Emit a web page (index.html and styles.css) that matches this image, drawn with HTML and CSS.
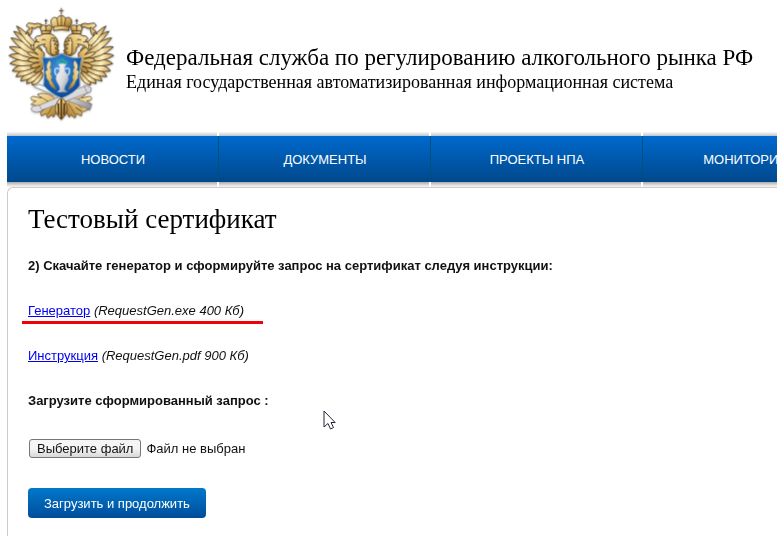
FILE: index.html
```html
<!DOCTYPE html>
<html lang="ru">
<head>
<meta charset="utf-8">
<title>Тестовый сертификат</title>
<link rel="stylesheet" href="styles.css">
</head>
<body>
<header class="header">
  <svg class="emblem" viewBox="0 0 375 390" aria-hidden="true">
    <defs>
      <linearGradient id="gold" x1="0" y1="0" x2="1" y2="1">
        <stop offset="0" stop-color="#fff3c4"/><stop offset=".5" stop-color="#e3bd6b"/><stop offset="1" stop-color="#95631f"/>
      </linearGradient>
      <linearGradient id="feather" x1="0" y1="0" x2="1" y2="0">
        <stop offset="0" stop-color="#c99b48"/><stop offset=".4" stop-color="#fff0bd"/><stop offset="1" stop-color="#bd8c3e"/>
      </linearGradient>
      <linearGradient id="silver" x1="0" y1="0" x2="1" y2="1">
        <stop offset="0" stop-color="#ffffff"/><stop offset=".6" stop-color="#d5d5d9"/><stop offset="1" stop-color="#85858d"/>
      </linearGradient>
      <radialGradient id="shield" cx=".45" cy=".35" r=".8">
        <stop offset="0" stop-color="#4a9be4"/><stop offset=".5" stop-color="#1762b5"/><stop offset="1" stop-color="#07377e"/>
      </radialGradient>
      <g id="half" stroke="#3d2f1c" stroke-width="2.5" stroke-linejoin="round">
        <g fill="url(#feather)">
          <path d="M132 222Q118 252 97 256Q92 242 112 214Z"/>
          <path d="M126 216Q106 248 80 251Q78 236 108 205Z"/>
          <path d="M120 211Q92 241 62 243Q63 227 104 198Z"/>
          <path d="M118 204Q82 231 48 230Q50 214 102 190Z"/>
          <path d="M117 197Q72 220 37 213Q40 198 103 182Z"/>
          <path d="M116 190Q66 205 30 191Q35 178 104 174Z"/>
          <path d="M116 183Q62 189 27 167Q34 156 106 166Z"/>
          <path d="M117 177Q62 174 28 141Q38 134 108 158Z"/>
          <path d="M118 171Q62 155 33 114Q44 110 112 150Z"/>
          <path d="M122 165Q66 134 41 94Q55 92 118 146Z"/>
          <path d="M128 163Q66 120 50 78Q69 84 125 148Z"/>
        </g>
        <g fill="url(#gold)">
          <path d="M133 159Q103 132 91 136Q99 152 114 164Q88 152 82 159Q96 173 116 176Q86 171 82 181Q98 191 117 187Q93 190 91 202Q104 208 121 198Q103 207 104 218Q119 220 130 205Z"/>
          <path d="M164 171C148 164 137 157 139 143L131 139L135 132L122 135C112 136 106 145 104 150C98 138 103 124 112 121L104 116Q107 106 121 107C133 98 151 98 162 107C177 119 177 139 171 151L183 172Z"/>
          <path d="M155 114L165 115L159 123L171 124L162 133L174 135L165 145L178 152L166 158L178 168L154 163C149 148 154 139 151 128Z"/>
          <path d="M127 98Q117 83 124 76Q130 72 138 79Q146 72 153 77Q160 84 149 98Z"/>
          <path d="M125 93L151 93L151 101L125 101Z"/>
          <path d="M138 73L138 57M133 62L143 62M138 75L138 94" fill="none"/>
          <path d="M124 73Q111 67 106 72L85 69L79 77L91 86Q79 91 76 102L85 96L88 108Q97 99 97 88L94 82L103 86Q113 78 124 82Z"/>
        </g>
        <path d="M125 120Q134 115 137 121" fill="none"/>
        <path d="M118 126L104 125" fill="none"/>
      </g>
      <g id="foot" fill="url(#gold)" stroke="#5a4421" stroke-width="2">
        <path d="M160 290Q135 274 112 283L124 294L100 289Q88 291 96 300L108 303L93 313L117 319L97 326L119 335L141 322L122 337L124 348L138 341L143 354L157 344L160 352L180 319Z"/>
        <path d="M121 290L147 306M121 326L145 304M143 343L163 310" fill="none"/>
      </g>
    </defs>
    <g class="emblem-art">
      <use href="#half"/>
      <use href="#half" transform="matrix(-1 0 0 1 368 0)"/>
      <use href="#foot"/>
      <use href="#foot" transform="matrix(-1 0 0 1 368 0)"/>
      <g fill="url(#silver)" stroke="#77767b" stroke-width="2">
        <path d="M101 260L117 253L275 314L269 330L254 323Z"/>
        <path d="M261 257L274 264L271 276L129 329Q113 341 100 334Q89 330 98 319L121 315L233 266Z"/>
        <path d="M251 254L262 280M117 315L129 334" fill="none"/>
      </g>
      <g fill="url(#gold)" stroke="#4c3414" stroke-width="2.5">
        <path d="M184 289Q157 318 170 342L184 359L198 342Q211 318 184 289Z"/>
        <path d="M184 291L184 356M175 310L176 345M193 310L192 345" fill="none" stroke-width="5"/>
        <path d="M159 82C145 62 158 46 171 55Q184 37 197 55C210 46 223 62 209 82Z"/>
        <path d="M184 43L184 24M177 32L191 32M184 47L184 82M171 55L175 82M197 55L193 82" fill="none"/>
        <path d="M161 80Q184 74 207 80L207 92Q184 86 161 92Z"/>
      </g>
      <path d="M126 171Q156 179 185 160Q216 179 246 171Q236 218 240 256Q222 281 185 295Q151 281 130 256Q136 218 126 171Z" fill="url(#shield)" stroke="#a5b2b6" stroke-width="3"/>
      <g fill="url(#gold)" stroke="#a98735" stroke-width="1">
        <path id="sprig" d="M149 181Q135 195 143 211Q132 211 140 227Q136 232 147 244Q148 259 169 269Q161 250 153 240Q159 229 151 222Q157 210 149 203Q156 191 149 181Z"/>
        <use href="#sprig" transform="matrix(-1 0 0 1 373 0)"/>
      </g>
      <path d="M172 190Q169 181 179 184L187 176L193 184Q204 180 200 191Q187 185 172 190Z" fill="#17999a" stroke="#43c3a7" stroke-width="2"/>
      <path d="M178 207Q160 198 166 221L176 232M195 207Q213 198 207 221L197 232" fill="none" stroke="#dbe2e8" stroke-width="4"/>
      <path d="M175 193Q187 188 199 193L194 199L195 215Q215 232 195 258L193 268L202 276L172 276L180 268L178 258Q158 232 178 215L179 199Z" fill="url(#silver)" stroke="#aab6c2" stroke-width="1"/>
    </g>
  </svg>
  <div class="heading">
    <div class="agency">Федеральная служба по регулированию алкогольного рынка РФ</div>
    <div class="system">Единая государственная автоматизированная информационная система</div>
  </div>
</header>
<nav class="menu">
  <a class="menu-item" href="#">НОВОСТИ</a>
  <a class="menu-item" href="#">ДОКУМЕНТЫ</a>
  <a class="menu-item" href="#">ПРОЕКТЫ НПА</a>
  <a class="menu-item" href="#">МОНИТОРИНГ</a>
</nav>
<main class="panel">
  <h1 class="title">Тестовый сертификат</h1>
  <p class="line strong">2) Скачайте генератор и сформируйте запрос на сертификат следуя инструкции:</p>
  <p class="line marked"><a href="#">Генератор</a> <em>(RequestGen.exe 400 Кб)</em></p>
  <p class="line"><a href="#">Инструкция</a> <em>(RequestGen.pdf 900 Кб)</em></p>
  <p class="line strong">Загрузите сформированный запрос :</p>
  <form class="form">
    <div class="file">
      <input class="file-input" type="file" id="request">
      <label class="file-button" for="request">Выберите файл</label>
      <span>Файл не выбран</span>
    </div>
    <button class="submit" type="button">Загрузить и продолжить</button>
  </form>
</main>
<svg class="cursor" viewBox="0 0 13 20" aria-hidden="true">
  <path d="M1 1V17L5 13.500L7.500 19L10.500 17.500L8 12.500H12.200Z" fill="#fff" stroke="#25253a"/>
</svg>
</body>
</html>
```

FILE: styles.css
```css
body {
  display: flex;
  flex-direction: column;
  min-height: 100vh;
  margin: 0;
  overflow: hidden;
  background: #fff;
  color: #111;
  font: 13px/15px "Liberation Sans", Arial, sans-serif;
}

.header {
  display: flex;
  height: 132px;
  white-space: nowrap;
}

.emblem {
  flex: none;
  width: 125px;
  height: 130px;
}

.emblem-art {
  filter: drop-shadow(0 2px 3px #bbb);
}

.heading {
  padding: 44px 0 0 1px;
  color: #000;
  font-family: "Liberation Serif", "Times New Roman", serif;
}

.agency {
  font-size: 23px;
  line-height: 28px;
}

.system {
  font-size: 18px;
  line-height: 20px;
}

.menu {
  display: flex;
  margin-left: 7px;
  overflow: hidden;
}

.menu-item {
  flex: 0 0 212px;
  box-sizing: border-box;
  height: 55px;
  padding-top: 20px;
  color: #fff;
  font-size: 13px;
  line-height: 15px;
  text-align: center;
  text-decoration: none;
  background:
    linear-gradient(#00556f, #004f7c) 211px 4px / 1px 46px no-repeat,
    linear-gradient(#0069ce, #00488b) 0 4px / 212px 46px no-repeat,
    linear-gradient(#fff, #fff) 210px 0 / 2px 55px no-repeat,
    linear-gradient(#f8f8f8, #c0c4c8 4px, #aaa 50px, #eee 54px);
}

.panel {
  flex: 1;
  margin-left: 7px;
  padding: 16px 20px;
  border: 1px solid #ccc;
  border-width: 1px 0 0 1px;
  border-radius: 6px 0 0 0;
}

.title {
  margin: 0 0 24px;
  color: #000;
  font: 27px/30px "Liberation Serif", "Times New Roman", serif;
}

.line {
  margin: 0 0 30px;
}

.strong {
  font-weight: bold;
}

.line a {
  color: #00e;
}

.marked {
  position: relative;
}

.marked::after {
  content: "";
  position: absolute;
  left: -6px;
  top: 18px;
  width: 241px;
  height: 3px;
  background: #f00008;
}

.file {
  display: flex;
  align-items: center;
  gap: 5px;
  margin-bottom: 30px;
  padding: 1px 0 0 1px;
}

.file-input {
  position: absolute;
  width: 1px;
  height: 1px;
  opacity: 0;
}

.file-button {
  padding: 1px 7px;
  border: 1px solid #777;
  border-radius: 3px;
  background: linear-gradient(#f5f5f5 50%, #d8d8d8);
}

.submit {
  height: 30px;
  padding: 0 16px;
  border: 0;
  border-radius: 4px;
  background: linear-gradient(#0078cb, #004d9b);
  color: #fff;
  font: 13px/15px "Liberation Sans", Arial, sans-serif;
}

.cursor {
  position: absolute;
  left: 323px;
  top: 410px;
  width: 13px;
  height: 20px;
}
```
